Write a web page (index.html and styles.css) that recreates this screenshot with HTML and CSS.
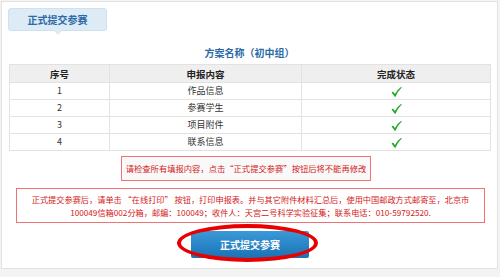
FILE: index.html
```html
<!DOCTYPE html>
<html lang="zh">
<head>
<meta charset="utf-8">
<link rel="stylesheet" href="styles.css">
</head>
<body>
<div class="panel">
  <div class="tab">正式提交参赛</div>
  <div class="title">方案名称（初中组）</div>
  <table class="grid">
    <thead>
      <tr><th class="c1">序号</th><th class="c2">申报内容</th><th class="c3">完成状态</th></tr>
    </thead>
    <tbody>
      <tr><td>1</td><td>作品信息</td><td><svg class="check" viewBox="0 0 12 12"><path d="M0.6 6.6 L2.2 5.4 L4.3 8.2 Q7 3.4 11.2 0.4 L11.7 1 Q7.6 4.8 4.6 11.6 Z"/></svg></td></tr>
      <tr><td>2</td><td>参赛学生</td><td><svg class="check" viewBox="0 0 12 12"><path d="M0.6 6.6 L2.2 5.4 L4.3 8.2 Q7 3.4 11.2 0.4 L11.7 1 Q7.6 4.8 4.6 11.6 Z"/></svg></td></tr>
      <tr><td>3</td><td>项目附件</td><td><svg class="check" viewBox="0 0 12 12"><path d="M0.6 6.6 L2.2 5.4 L4.3 8.2 Q7 3.4 11.2 0.4 L11.7 1 Q7.6 4.8 4.6 11.6 Z"/></svg></td></tr>
      <tr><td>4</td><td>联系信息</td><td><svg class="check" viewBox="0 0 12 12"><path d="M0.6 6.6 L2.2 5.4 L4.3 8.2 Q7 3.4 11.2 0.4 L11.7 1 Q7.6 4.8 4.6 11.6 Z"/></svg></td></tr>
    </tbody>
  </table>
  <div class="warn">请检查所有填报内容，点击“正式提交参赛”按钮后将不能再修改</div>
  <div class="notice">
    <p>正式提交参赛后，请单击 “在线打印” 按钮，打印申报表。并与其它附件材料汇总后，使用中国邮政方式邮寄至，北京市</p>
    <p>100049信箱002分箱，邮编：100049；收件人：天宫二号科学实验征集；联系电话：010-59792520.</p>
  </div>
  <div class="btnwrap">
    <button class="submit">正式提交参赛</button>
    <span class="ring"></span>
  </div>
</div>
</body>
</html>
```
FILE: styles.css
```css
html, body {
  margin: 0;
  padding: 0;
  background: #f3f3f3;
  font-family: "Noto Sans CJK SC", "Liberation Sans", sans-serif;
}
.panel {
  box-sizing: border-box;
  width: 497px;
  height: 268px;
  margin: 1px 0 0 1px;
  background: #fff;
  border: 1px solid #e2e2e2;
  display: flex;
  flex-direction: column;
  align-items: flex-start;
  padding: 6px 0 0 6px;
}
.tab {
  position: relative;
  box-sizing: border-box;
  width: 99px;
  height: 23px;
  background: #dcebf6;
  border: 1px solid #cfe0ee;
  border-radius: 3px;
  color: #2c6aa6;
  font-size: 10px;
  font-weight: bold;
  line-height: 21px;
  text-align: center;
}
.tab::after {
  content: "";
  position: absolute;
  left: 44px;
  bottom: -5px;
  border-left: 5px solid transparent;
  border-right: 5px solid transparent;
  border-top: 5px solid #dcebf6;
}
.title {
  align-self: stretch;
  margin: 15px 0 0 0;
  padding-right: 6px;
  text-align: center;
  color: #2c6aa6;
  font-size: 10px;
  font-weight: bold;
  line-height: 14px;
  height: 15px;
}
.grid {
  margin-top: 3px;
  margin-left: 1px;
  width: 482px;
  border-collapse: collapse;
  font-size: 9px;
  color: #333;
}
.grid th, .grid td {
  border: 1px solid #e2e2e2;
  text-align: center;
  padding: 0;
  height: 16px;
  line-height: 16px;
}
.grid th {
  background: #efefef;
  font-weight: bold;
  font-size: 9.5px;
  height: 17px;
  color: #222;
}
.c1 { width: 99px; }
.c2 { width: 191px; }
.check {
  width: 11px;
  height: 12px;
  vertical-align: middle;
  fill: #22a822;
}
.warn {
  box-sizing: border-box;
  margin: 5px 0 0 113px;
  width: 250px;
  height: 25px;
  border: 1px solid #f07272;
  background: #f9f9f9;
  color: #d42020;
  font-size: 8.3px;
  line-height: 23px;
  text-align: center;
  white-space: nowrap;
}
.notice {
  box-sizing: border-box;
  margin: 7px 0 0 8px;
  width: 469px;
  height: 35px;
  border: 1px solid #f07272;
  background: #fff;
  color: #d42020;
  font-size: 8.2px;
  text-align: center;
  padding-top: 4px;
}
.notice p {
  margin: 0;
  line-height: 13px;
  white-space: nowrap;
}
.btnwrap {
  position: relative;
  margin: 8px 0 0 183px;
  width: 118px;
  height: 27px;
}
.submit {
  display: block;
  width: 118px;
  height: 27px;
  border: none;
  border-radius: 2px;
  background: linear-gradient(#3b9ad8, #1a72b5);
  color: #fff;
  font-family: "Noto Sans CJK SC", sans-serif;
  font-size: 10px;
  font-weight: bold;
  padding: 0;
}
.ring {
  position: absolute;
  left: -14px;
  top: -7px;
  width: 141px;
  height: 38px;
  border: 4px solid #e80000;
  border-radius: 50%;
  box-sizing: border-box;
}
```
